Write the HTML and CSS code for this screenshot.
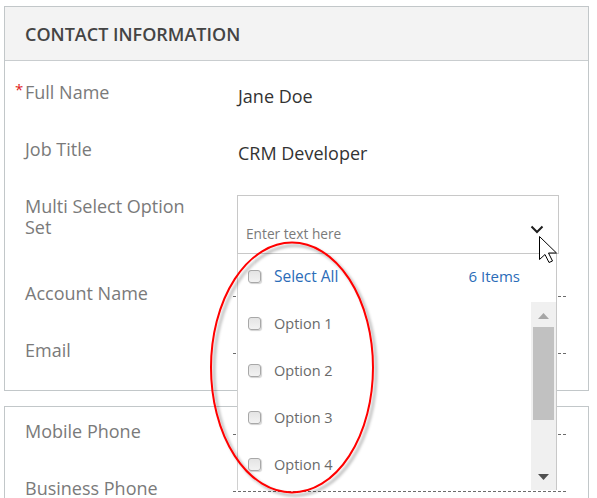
FILE: index.html
```html
<!DOCTYPE html>
<html lang="en">
<head>
<meta charset="utf-8">
<title>Contact Information</title>
<link rel="stylesheet" href="styles.css">
</head>
<body>
<div class="page">
  <section class="card card-main">
    <header class="card-head">CONTACT INFORMATION</header>
    <div class="card-body body-main">
      <div class="row">
        <div class="label"><span class="req">*</span>Full Name</div>
        <div class="value"><span class="val-text">Jane Doe</span></div>
      </div>
      <div class="row">
        <div class="label">Job Title</div>
        <div class="value"><span class="val-text">CRM Developer</span></div>
      </div>
      <div class="row row-multi">
        <div class="label">Multi Select Option Set</div>
        <div class="value">
          <div class="ms">
            <div class="ms-input">
              <span class="ph">Enter text here</span>
              <svg class="chev" width="14" height="9" viewBox="0 0 14 9"><polyline points="1.5,1.5 7,7 12.5,1.5" fill="none" stroke="#1e1e1e" stroke-width="2"/></svg>
            </div>
            <div class="ms-drop">
              <div class="drop-head">
                <span class="cb"></span>
                <span class="sel-all">Select All</span>
                <span class="count">6 Items</span>
              </div>
              <div class="drop-list">
                <div class="opts">
                  <div class="opt"><span class="cb"></span><span class="opt-text">Option 1</span></div>
                  <div class="opt"><span class="cb"></span><span class="opt-text">Option 2</span></div>
                  <div class="opt"><span class="cb"></span><span class="opt-text">Option 3</span></div>
                  <div class="opt"><span class="cb"></span><span class="opt-text">Option 4</span></div>
                  <div class="opt"><span class="cb"></span><span class="opt-text">Option 5</span></div>
                  <div class="opt"><span class="cb"></span><span class="opt-text">Option 6</span></div>
                </div>
                <div class="sbar">
                  <svg class="sb-arrow" width="11" height="6" viewBox="0 0 11 6"><polygon points="5.5,0 11,6 0,6" fill="#a6a6a6"/></svg>
                  <div class="sb-thumb"></div>
                  <svg class="sb-arrow sb-down" width="11" height="6" viewBox="0 0 11 6"><polygon points="0,0 11,0 5.5,6" fill="#505050"/></svg>
                </div>
              </div>
            </div>
          </div>
        </div>
      </div>
      <div class="row">
        <div class="label">Account Name</div>
        <div class="value"><div class="empty-line"></div></div>
      </div>
      <div class="row">
        <div class="label">Email</div>
        <div class="value"><div class="empty-line"></div></div>
      </div>
    </div>
  </section>

  <section class="card card-second">
    <div class="card-body body-second">
      <div class="row">
        <div class="label">Mobile Phone</div>
        <div class="value"><div class="empty-line"></div></div>
      </div>
      <div class="row">
        <div class="label">Business Phone</div>
        <div class="value"><div class="empty-line"></div></div>
      </div>
    </div>
  </section>

  <svg class="annot" width="190" height="270" viewBox="0 0 190 270">
    <defs>
      <filter id="sh" x="-10%" y="-10%" width="130%" height="130%">
        <feDropShadow dx="3" dy="3" stdDeviation="1.5" flood-color="#000" flood-opacity="0.35"/>
      </filter>
    </defs>
    <ellipse cx="87" cy="129.5" rx="81" ry="125" fill="none" stroke="#ff0000" stroke-width="2" filter="url(#sh)"/>
  </svg>

  <svg class="cursor" width="20" height="28" viewBox="0 0 20 28">
    <path d="M0.5,0.5 L0.5,23.5 L6,18.5 L10,26.5 L13.5,25 L9.5,17 L17.5,17 Z" fill="#fff" stroke="#000" stroke-width="1" stroke-linejoin="miter"/>
  </svg>
</div>
</body>
</html>
```
FILE: styles.css
```css
* { box-sizing: border-box; }
html, body { margin: 0; padding: 0; background: #fff; }
body {
  font-family: "Open Sans", "Liberation Sans", sans-serif;
  width: 597px;
  height: 498px;
  overflow: hidden;
}
.page {
  position: relative;
  padding: 6px 0 0 4px;
}
.card {
  width: 585px;
  border: 1px solid #c2c7c9;
  background: #fff;
}
.card-main { height: 385px; }
.card-second { margin-top: 15px; height: 120px; }
.card-head {
  height: 54px;
  background: #f3f3f3;
  border-bottom: 1px solid #c9cdcf;
  padding: 0 0 0 20px;
  display: flex;
  align-items: center;
  font-size: 18px;
  font-weight: 600;
  color: #444;
}
.body-main { padding: 10px 0 4px 0; }
.body-second { padding: 3px 0 0 0; }
.row {
  display: grid;
  grid-template-columns: 208px 334px;
  padding-left: 20px;
  height: 57px;
}
.row-multi { height: 87px; }
.label {
  padding-top: 11px;
  font-size: 18px;
  line-height: 21px;
  color: #7a7a7a;
  padding-right: 24px;
}
.req {
  display: inline-block;
  width: 10px;
  margin-left: -10px;
  color: #e0201b;
  font-size: 15px;
  vertical-align: 4px;
  line-height: 10px;
}
.value { position: relative; }
.val-text {
  display: block;
  padding: 15px 0 0 5px;
  font-size: 18px;
  line-height: 21px;
  color: #333;
}
.empty-line {
  margin-top: 24px;
  height: 1px;
  background: repeating-linear-gradient(to right, #6b6b6b 0 3px, transparent 3px 5px);
}
.ms {
  position: relative;
  margin: 10px 0 0 4px;
  width: 322px;
}
.ms-input {
  height: 59px;
  border: 1px solid #c8c8c8;
  display: flex;
  align-items: flex-end;
  justify-content: space-between;
  padding: 0 14px 9px 8px;
}
.ph {
  font-size: 13.7px;
  line-height: 20px;
  color: #7a7a7a;
}
.chev { margin-bottom: 10px; }
.ms-drop {
  position: absolute;
  left: 0;
  top: 59px;
  width: 320px;
  height: 236px;
  background: #fff;
  border-left: 1px solid #d0d0d0;
  border-right: 1px solid #c8c8c8;
  z-index: 2;
  display: flex;
  flex-direction: column;
}
.drop-head {
  height: 48px;
  display: flex;
  align-items: center;
  padding: 0 36px 4px 10px;
}
.cb {
  width: 13px;
  height: 13px;
  border: 1px solid #a8a8a8;
  border-radius: 3px;
  background: linear-gradient(#e4e4e4, #f2f2f2);
  box-shadow: 1px 1px 1px rgba(0,0,0,0.18);
  flex: none;
}
.sel-all {
  margin-left: 13px;
  font-size: 15.5px;
  color: #2b6cb8;
  flex: 1;
}
.count {
  font-size: 15px;
  color: #2b6cb8;
}
.drop-list {
  flex: 1;
  display: flex;
  overflow: hidden;
}
.opts { flex: 1; overflow: hidden; }
.opt {
  height: 47px;
  display: flex;
  align-items: center;
  padding: 0 0 5px 10px;
}
.opt-text {
  margin-left: 13px;
  font-size: 14.5px;
  color: #6a6a6a;
}
.sbar {
  width: 25px;
  background: #f0f0f0;
  display: flex;
  flex-direction: column;
  align-items: center;
  padding-top: 11px;
}
.sb-thumb {
  width: 21px;
  height: 93px;
  margin-top: 8px;
  background: #c1c1c1;
}
.sb-down { margin-top: auto; margin-bottom: 10px; }
.annot {
  position: absolute;
  left: 205px;
  top: 238px;
  z-index: 5;
  pointer-events: none;
}
.cursor {
  position: absolute;
  left: 539px;
  top: 236px;
  z-index: 6;
}
```
